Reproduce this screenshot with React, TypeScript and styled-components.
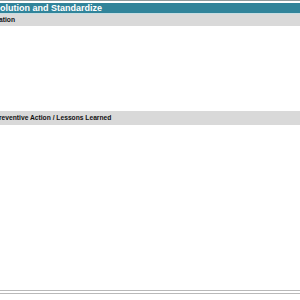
import styled, { createGlobalStyle } from "styled-components";

const GlobalStyle = createGlobalStyle`
  html, body {
    margin: 0;
    padding: 0;
    background: #ffffff;
    overflow: hidden;
  }
`;

const Sheet = styled.div`
  width: 300px;
  height: 300px;
  display: flex;
  flex-direction: column;
  font-family: "Liberation Sans", Arial, sans-serif;
  border-top: 1px solid #8f9b9d;
`;

const TitleBar = styled.div`
  margin-top: 2px;
  height: 10px;
  background: #31849a;
  border-bottom: 1px solid #c6dde2;
  color: #ffffff;
  font-size: 9px;
  font-weight: 700;
  line-height: 10px;
  white-space: nowrap;
  overflow: hidden;
`;

const SubHeader = styled.div<{ $tall?: boolean }>`
  height: ${(p) => (p.$tall ? "14px" : "12px")};
  background: #d9d9d9;
  color: #111111;
  font-size: 6.7px;
  font-weight: 700;
  line-height: ${(p) => (p.$tall ? "14px" : "12px")};
  white-space: nowrap;
  overflow: hidden;
  text-indent: -1px;
`;

const Body = styled.div<{ $h: number }>`
  height: ${(p) => p.$h}px;
  background: #ffffff;
`;

const Rule = styled.div`
  height: 1px;
  background: #b9b9b9;
  margin-bottom: 2px;
`;

export default function App() {
  return (
    <>
      <GlobalStyle />
      <Sheet>
        <TitleBar>olution and Standardize</TitleBar>
        <SubHeader>ation</SubHeader>
        <Body $h={85} />
        <SubHeader $tall>reventive Action / Lessons Learned</SubHeader>
        <Body $h={165} />
        <Rule />
        <Rule />
      </Sheet>
    </>
  );
}
